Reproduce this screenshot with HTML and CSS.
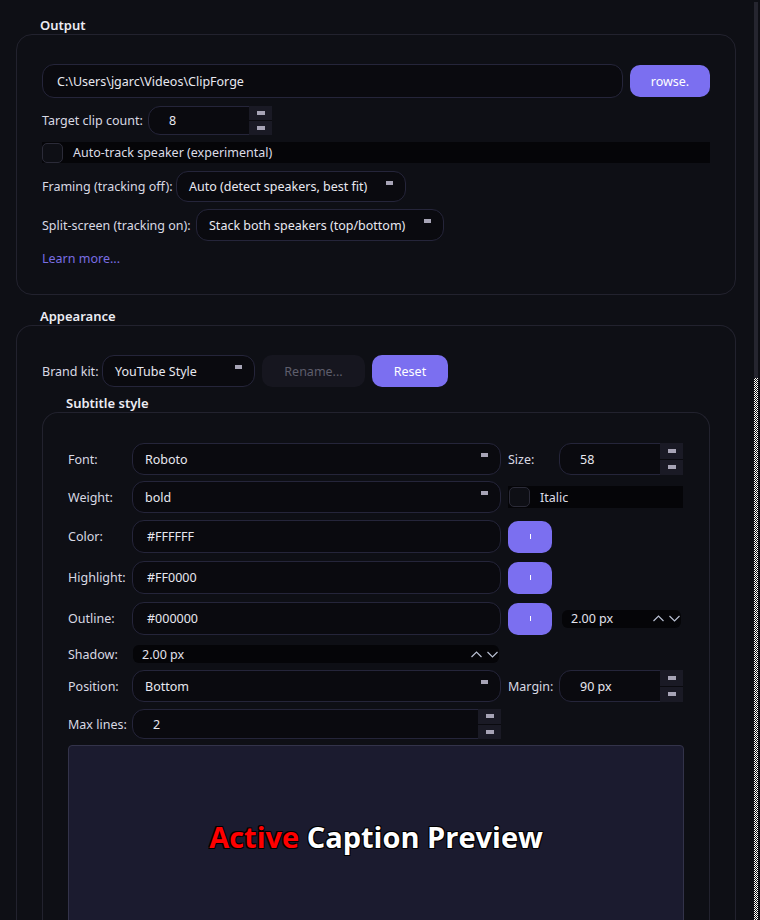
FILE: index.html
```html
<!DOCTYPE html>
<html lang="en">
  <head>
    <title>ClipForge Settings</title>
    <link rel="stylesheet" href="styles.css">
  </head>
  <body>
    <div class="page">
      <main class="content">
        <h2 class="group-title">Output</h2>
        <section class="group output">
          <div class="row path-row">
            <div class="input path">C:\Users\jgarc\Videos\ClipForge</div>
            <button class="btn primary browse">rowse.</button>
          </div>
          <div class="row clip-row">
            <span class="label lbl-clip">Target clip count:</span>
            <div class="spin clip-spin">
              <span class="value">8</span>
              <span class="spin-btns"><i></i><i></i></span>
            </div>
          </div>
          <label class="check-row track-row">
            <span class="box"></span>
            <span>Auto-track speaker (experimental)</span>
          </label>
          <div class="row framing-row">
            <span class="label lbl-framing">Framing (tracking off):</span>
            <div class="combo framing">Auto (detect speakers, best fit)<i class="drop"></i></div>
          </div>
          <div class="row split-row">
            <span class="label lbl-split">Split-screen (tracking on):</span>
            <div class="combo split">Stack both speakers (top/bottom)<i class="drop"></i></div>
          </div>
          <a class="learn" href="#">Learn more...</a>
        </section>

        <h2 class="group-title appearance-title">Appearance</h2>
        <section class="group appearance">
          <div class="row brand-row">
            <span class="label lbl-brand">Brand kit:</span>
            <div class="combo brand">YouTube Style<i class="drop"></i></div>
            <button class="btn disabled rename">Rename...</button>
            <button class="btn primary reset">Reset</button>
          </div>

          <h3 class="group-title sub-title">Subtitle style</h3>
          <section class="group subtitle">
            <div class="form-row r-font">
              <span class="label">Font:</span>
              <div class="combo">Roboto<i class="drop"></i></div>
              <div class="side">
                <span class="label side-label">Size:</span>
                <div class="spin side-spin">
                  <span class="value">58</span>
                  <span class="spin-btns"><i></i><i></i></span>
                </div>
              </div>
            </div>

            <div class="form-row r-weight">
              <span class="label">Weight:</span>
              <div class="combo">bold<i class="drop"></i></div>
              <label class="check-row italic-row">
                <span class="box"></span>
                <span>Italic</span>
              </label>
            </div>

            <div class="form-row r-color">
              <span class="label">Color:</span>
              <div class="input hex">#FFFFFF</div>
              <div class="side">
                <button class="btn primary swatch"><i></i></button>
              </div>
            </div>

            <div class="form-row r-color">
              <span class="label">Highlight:</span>
              <div class="input hex">#FF0000</div>
              <div class="side">
                <button class="btn primary swatch"><i></i></button>
              </div>
            </div>

            <div class="form-row r-color">
              <span class="label">Outline:</span>
              <div class="input hex">#000000</div>
              <div class="side">
                <button class="btn primary swatch"><i></i></button>
                <div class="flat-spin outline-spin">
                  <span>2.00 px</span>
                  <span class="arrows">
                    <svg width="11" height="7" viewBox="0 0 11 7"><polyline points="0.5,6 5.5,1 10.5,6"/></svg>
                    <svg width="11" height="7" viewBox="0 0 11 7"><polyline points="0.5,1 5.5,6 10.5,1"/></svg>
                  </span>
                </div>
              </div>
            </div>

            <div class="form-row r-shadow">
              <span class="label">Shadow:</span>
              <div class="flat-spin shadow-spin">
                <span>2.00 px</span>
                <span class="arrows">
                  <svg width="11" height="7" viewBox="0 0 11 7"><polyline points="0.5,6 5.5,1 10.5,6"/></svg>
                  <svg width="11" height="7" viewBox="0 0 11 7"><polyline points="0.5,1 5.5,6 10.5,1"/></svg>
                </span>
              </div>
            </div>

            <div class="form-row r-position">
              <span class="label">Position:</span>
              <div class="combo">Bottom<i class="drop"></i></div>
              <div class="side">
                <span class="label side-label">Margin:</span>
                <div class="spin side-spin">
                  <span class="value">90 px</span>
                  <span class="spin-btns"><i></i><i></i></span>
                </div>
              </div>
            </div>

            <div class="form-row r-lines">
              <span class="label">Max lines:</span>
              <div class="spin lines-spin">
                <span class="value">2</span>
                <span class="spin-btns"><i></i><i></i></span>
              </div>
            </div>

            <div class="preview">
              <p class="caption"><span class="hl">Active</span> Caption Preview</p>
            </div>
          </section>
        </section>
      </main>
      <div class="scrollbar">
        <div class="track"></div>
        <div class="thumb"></div>
      </div>
    </div>
  </body>
</html>
```

FILE: styles.css
```css
body {
  margin: 0;
  height: 920px;
  overflow: hidden;
  background-color: #0e0f15;
  color: #d9d9e3;
  font-family: "Noto Sans", "Open Sans", sans-serif;
  font-size: 12.5px;
}
.page {
  display: flex;
  height: 920px;
}
.content {
  width: 752px;
  padding: 16px 16px 0;
  box-sizing: border-box;
}

/* group boxes */
.group-title {
  margin: 0 0 0 24px;
  font-size: 13px;
  font-weight: 600;
  line-height: 18px;
  color: #ececf3;
}
.appearance-title {
  margin-top: 12px;
}
.group {
  border: 1px solid #22222e;
  border-radius: 16px;
  padding: 29px 25px 26px;
  display: flex;
  flex-direction: column;
}
.appearance {
  border-bottom: none;
  border-radius: 16px 16px 0 0;
  padding-bottom: 0;
}
.subtitle {
  border-bottom: none;
  border-radius: 16px 16px 0 0;
  padding: 30px 25px 0;
}
.sub-title {
  margin-top: 7px;
}

/* rows */
.row {
  display: flex;
  align-items: center;
  gap: 6px;
}
.path-row { gap: 7px; height: 34px; }
.clip-row { margin-top: 8px; }
.track-row { margin-top: 7px; }
.framing-row { margin-top: 8px; }
.split-row { margin-top: 7px; }

.label {
  flex: none;
  white-space: nowrap;
  color: #d9d9e3;
}
.lbl-clip { width: 100px; }
.lbl-framing { width: 128px; }
.lbl-split { width: 148px; }
.lbl-brand { width: 54px; }

/* inputs */
.input, .combo, .spin {
  position: relative;
  box-sizing: border-box;
  background-color: #0a0a0f;
  border: 1px solid #25253a;
  border-radius: 12px;
  color: #e8e8f0;
  display: flex;
  align-items: center;
  white-space: nowrap;
}
.input { padding-left: 14px; }
.path { width: 581px; height: 34px; }
.combo { padding-left: 12px; height: 32px; }
.combo .drop {
  position: absolute;
  right: 12px;
  top: 9px;
  width: 7px;
  height: 4px;
  background-color: #a7a4b6;
}
.framing { width: 230px; height: 31px; }
.split { width: 248px; }
.brand { width: 153px; }

.spin {
  padding-left: 20px;
  justify-content: space-between;
}
.spin-btns {
  align-self: stretch;
  width: 23px;
  margin: -1px -1px -1px 0;
  display: flex;
  flex-direction: column;
  gap: 1px;
  background-color: #0a0a0f;
}
.spin-btns i {
  flex: 1;
  background-color: #1a1a25;
  display: flex;
  align-items: center;
  justify-content: center;
}
.spin-btns i::before {
  content: "";
  width: 8px;
  height: 4px;
  background-color: #a7a4b6;
}
.clip-spin { width: 124px; height: 29px; }

/* checkbox rows */
.check-row {
  display: flex;
  align-items: center;
  gap: 10px;
  background-color: #050508;
  height: 21px;
  color: #dcdce6;
}
.check-row .box {
  box-sizing: border-box;
  width: 21px;
  height: 20px;
  border: 1.5px solid #2b2b38;
  border-radius: 5px;
  background-color: #0e0f15;
}

.learn {
  margin-top: 9px;
  line-height: 18px;
  color: #7a6ee3;
  text-decoration: none;
}

/* buttons */
.btn {
  font: inherit;
  border: none;
  border-radius: 10px;
  height: 32px;
  padding: 0;
  color: #ffffff;
}
.btn.primary { background-color: #7b6ff0; }
.btn.disabled {
  background-color: #16161f;
  color: #5e5e6c;
}
.browse { width: 80px; }
.rename { width: 103px; }
.reset { width: 76px; }
.brand-row { gap: 7px; }
.brand-row .lbl-brand { margin-right: -1px; }

/* subtitle style form */
.form-row {
  display: grid;
  grid-template-columns: 64px 369px 182px;
  align-items: center;
}
.form-row > :nth-child(3) { margin-left: 7px; }
.form-row .combo { height: 32px; }
.form-row .input { height: 33px; }
.r-weight { margin-top: 6px; }
.r-color { margin-top: 7px; }
.r-color + .r-color { margin-top: 8px; }
.r-shadow { margin-top: 10px; }
.r-position { margin-top: 7px; }
.r-lines { margin-top: 7px; }

.side {
  display: flex;
  align-items: center;
}
.side-label { width: 51px; }
.side-spin { width: 124px; height: 32px; }
.lines-spin { height: 30px; }

.italic-row { height: 22px; padding-left: 1px; }

.swatch {
  width: 44px;
  display: flex;
  align-items: center;
  justify-content: center;
}
.swatch i {
  width: 1px;
  height: 5px;
  background-color: #ffffff;
}

.flat-spin {
  display: flex;
  align-items: center;
  justify-content: space-between;
  height: 18px;
  background-color: #050508;
  border-radius: 6px;
  color: #e2e2ec;
  padding: 0 1px 0 9px;
}
.flat-spin .arrows {
  display: flex;
  gap: 5px;
}
.flat-spin polyline {
  fill: none;
  stroke: #b9c0d2;
  stroke-width: 1.2;
}
.outline-spin { width: 119px; margin-left: 10px; box-sizing: border-box; }
.shadow-spin { width: 366px; margin-left: 1px; box-sizing: border-box; }

.preview {
  margin-top: 6px;
  height: 180px;
  background-color: #1b1b2f;
  border: 1px solid #33334a;
  border-radius: 4px;
  display: flex;
  align-items: center;
  justify-content: center;
}
.caption {
  margin: 0;
  font-family: "Open Sans", "Noto Sans", sans-serif;
  font-weight: 700;
  font-size: 29px;
  color: #ffffff;
  text-shadow: 1px 1px 0 #000, -1px -1px 0 #000, 1px -1px 0 #000, -1px 1px 0 #000;
}
.caption .hl { color: #ff0000; }

/* scrollbar */
.scrollbar {
  width: 8px;
  padding-top: 2px;
  display: flex;
  flex-direction: column;
}
.track {
  width: 4px;
  height: 376px;
  margin-left: 2px;
  background-color: #25252f;
}
.thumb {
  flex: 1;
  width: 4px;
  margin-left: 2px;
  background: repeating-conic-gradient(#ffffff 0 25%, #111111 0 50%) 0 0 / 2px 2px;
}
```
